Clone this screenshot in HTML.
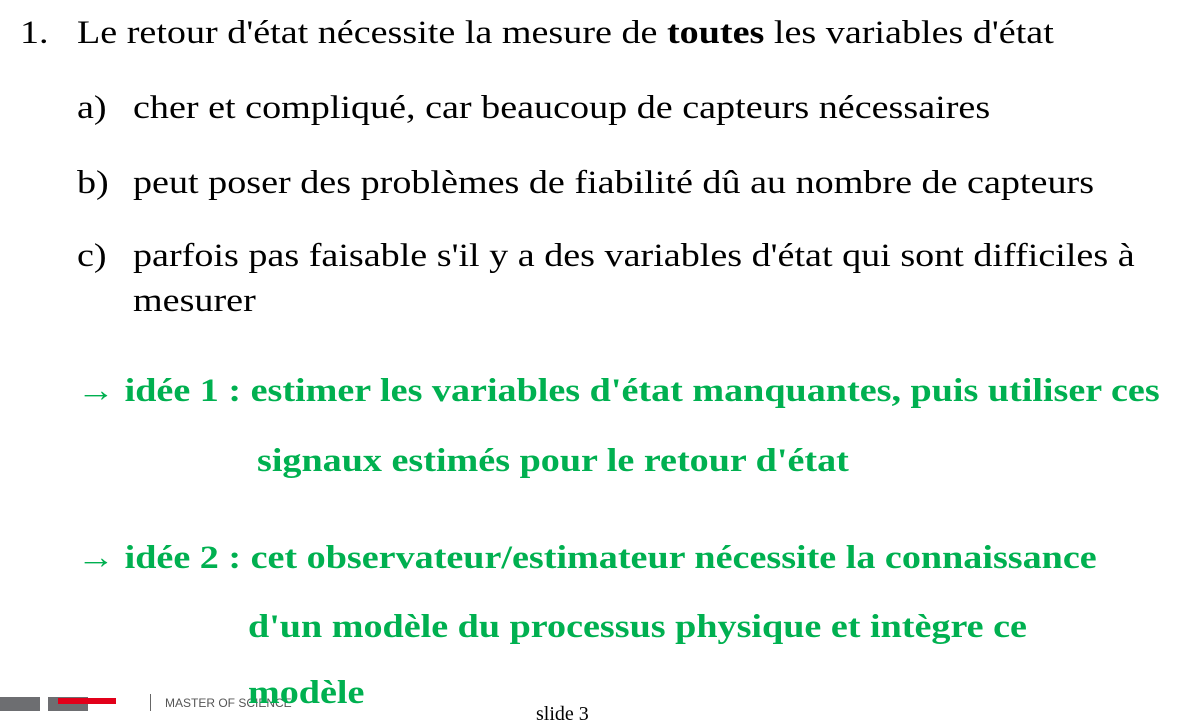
<!DOCTYPE html>
<html><head><meta charset="utf-8"><style>
body{margin:0;width:1186px;height:711px;overflow:hidden;background:#fff;position:relative;font-family:"Liberation Serif",serif;}
.t{position:absolute;white-space:nowrap;font-size:33px;line-height:40px;color:#000;transform:scaleX(1.155);transform-origin:0 0;}
.g{color:#00b050;font-weight:bold;}
</style></head><body>
<div class="t" style="left:20px;top:13px">1.</div>
<div class="t" style="left:77px;top:13px">Le retour d'état nécessite la mesure de <b>toutes</b> les variables d'état</div>
<div class="t" style="left:77px;top:88px">a)</div>
<div class="t" style="left:133px;top:88px">cher et compliqué, car beaucoup de capteurs nécessaires</div>
<div class="t" style="left:77px;top:163px">b)</div>
<div class="t" style="left:133px;top:163px">peut poser des problèmes de fiabilité dû au nombre de capteurs</div>
<div class="t" style="left:77px;top:236px">c)</div>
<div class="t" style="left:133px;top:236px">parfois pas faisable s'il y a des variables d'état qui sont difficiles à</div>
<div class="t" style="left:133px;top:281px">mesurer</div>
<div class="t g" style="left:77px;top:371px">→ idée 1 : estimer les variables d'état manquantes, puis utiliser ces</div>
<div class="t g" style="left:257px;top:441px">signaux estimés pour le retour d'état</div>
<div class="t g" style="left:77px;top:538px">→ idée 2 : cet observateur/estimateur nécessite la connaissance</div>
<div class="t g" style="left:248px;top:607px">d'un modèle du processus physique et intègre ce</div>
<div style="position:absolute;left:0;top:697px;width:40px;height:14px;background:#6d6e71"></div>
<div style="position:absolute;left:48px;top:697px;width:40px;height:14px;background:#6d6e71"></div>
<div style="position:absolute;left:58px;top:698px;width:58px;height:6px;background:#e2001a"></div>
<div style="position:absolute;left:150px;top:694px;width:1px;height:17px;background:#666"></div>
<div style="position:absolute;left:165px;top:696px;font-family:'Liberation Sans',sans-serif;font-size:12px;color:#555;">MASTER OF SCIENCE</div>
<div style="position:absolute;left:536px;top:703px;font-size:20px;color:#000">slide 3</div>
<div class="t g" style="left:248px;top:673px">modèle</div>
</body></html>
